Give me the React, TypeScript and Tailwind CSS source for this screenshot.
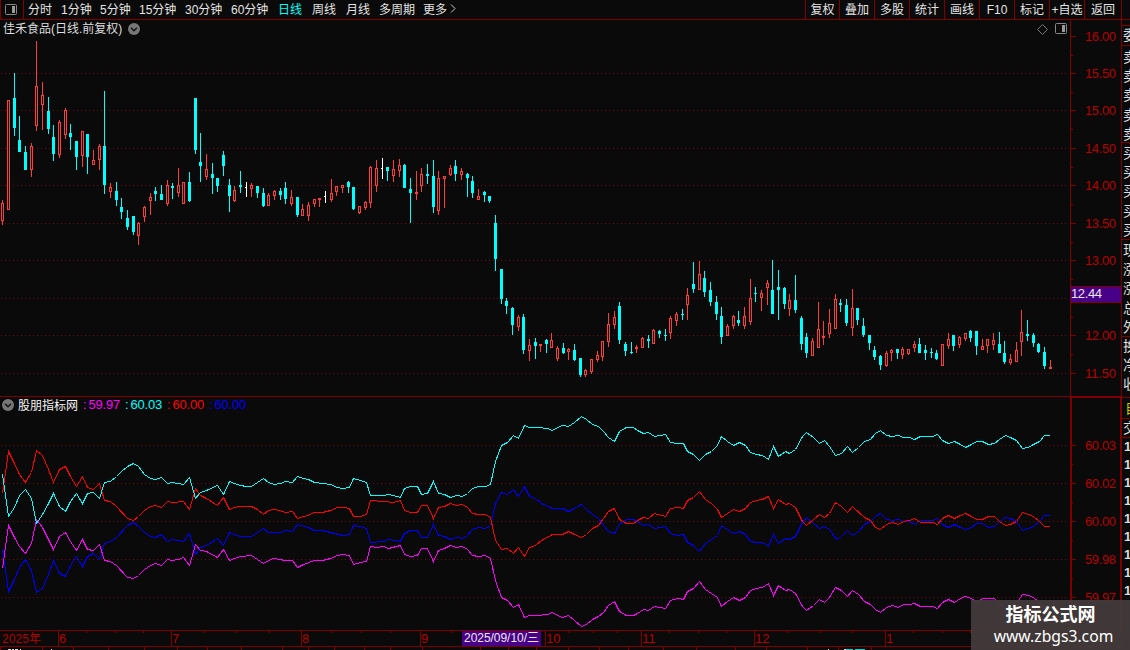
import React from "react";

type Kind = "R" | "C" | "W";
type Candle = [number, number, number, number, number, Kind];

const UP = "#ff3c3c";
const DOWN = "#00ffff";
const LINE = "#800000";
const LABEL = "#b80000";
const BG = "#0a0a0a";
const FONT = "'Liberation Sans','Noto Sans CJK SC',sans-serif";

// x, high, body top, body bottom, low, kind
const candles: Candle[] = [
  [2,200,203,221,225,"R"],[8,100,100,210,210,"R"],[14,73,98,128,136,"C"],[19,116,140,152,152,"C"],[25,146,152,170,170,"C"],
  [31,143,146,170,177,"R"],[36,41,86,126,131,"R"],[42,82,95,105,130,"R"],[48,97,111,129,134,"C"],[53,125,137,154,161,"C"],
  [59,120,122,155,158,"R"],[65,108,110,135,139,"R"],[70,124,133,137,150,"C"],[76,141,141,157,170,"C"],[82,131,131,156,167,"R"],
  [87,134,134,157,174,"C"],[93,150,160,165,165,"R"],[99,144,146,160,170,"R"],[104,91,146,185,194,"C"],[110,183,187,192,198,"R"],
  [116,182,191,200,206,"C"],[121,198,207,212,219,"C"],[127,210,218,227,230,"C"],[133,216,216,232,235,"C"],[138,222,223,236,245,"R"],
  [144,206,207,217,222,"R"],[150,193,197,201,215,"R"],[155,187,191,194,201,"C"],[161,185,194,200,200,"C"],[167,180,185,204,206,"R"],
  [172,183,186,188,199,"C"],[178,168,185,193,197,"R"],[183,182,182,204,204,"R"],[189,172,182,201,202,"C"],[195,98,98,150,154,"C"],
  [200,133,162,166,182,"C"],[206,154,169,177,180,"R"],[212,163,174,178,194,"C"],[217,178,178,186,192,"C"],[223,151,155,166,176,"C"],
  [229,179,185,196,212,"C"],[234,186,190,201,202,"R"],[240,171,185,187,193,"C"],[246,182,187,188,197,"W"],[251,183,185,189,197,"R"],
  [257,186,186,193,198,"C"],[263,188,193,206,207,"C"],[268,193,195,206,206,"R"],[274,190,191,196,200,"R"],[280,188,191,195,200,"C"],
  [285,182,188,199,204,"C"],[291,190,197,204,206,"R"],[297,197,197,215,217,"C"],[302,204,209,216,216,"R"],[308,202,205,216,221,"R"],
  [314,199,199,204,207,"R"],[319,198,198,200,207,"R"],[325,191,196,197,203,"W"],[331,179,193,200,202,"R"],[336,186,186,192,196,"R"],
  [342,185,185,188,193,"R"],[348,181,182,187,193,"C"],[353,187,187,209,210,"C"],[359,206,206,213,214,"R"],[365,201,202,208,210,"R"],
  [370,166,167,203,208,"R"],[376,160,168,186,192,"R"],[382,158,168,169,179,"W"],[387,167,167,171,181,"C"],[393,160,169,176,182,"R"],
  [399,159,165,171,177,"R"],[404,164,165,188,188,"C"],[410,178,189,193,223,"C"],[416,171,192,194,200,"R"],[421,168,174,186,192,"R"],
  [427,164,174,176,184,"C"],[433,160,176,207,213,"C"],[438,171,178,211,215,"R"],[444,176,176,179,208,"R"],[450,165,168,175,176,"R"],
  [455,160,166,174,181,"C"],[461,168,171,175,180,"R"],[467,173,174,178,197,"C"],[472,176,181,193,198,"C"],[478,189,196,200,200,"R"],
  [484,191,192,195,202,"C"],[489,196,196,201,203,"C"],[495,215,223,259,271,"C"],[501,269,269,299,304,"C"],[506,298,301,306,314,"C"],
  [512,307,308,325,335,"C"],[518,315,317,327,331,"R"],[523,314,317,350,354,"C"],[529,339,345,351,361,"R"],[535,338,342,346,359,"C"],
  [540,344,344,346,352,"R"],[546,339,340,344,353,"C"],[551,333,340,348,348,"R"],[557,346,348,359,361,"R"],[563,343,348,353,354,"C"],
  [568,348,349,352,360,"R"],[574,344,350,360,361,"C"],[580,358,358,375,377,"C"],[585,369,370,375,377,"R"],[591,359,359,372,374,"R"],
  [597,351,355,360,362,"R"],[602,341,341,357,361,"R"],[608,313,324,342,347,"R"],[614,311,317,325,329,"R"],[619,302,306,340,344,"C"],
  [625,342,344,351,356,"C"],[631,342,352,353,354,"C"],[636,345,347,349,353,"R"],[642,337,338,348,348,"R"],[648,335,339,341,348,"C"],
  [653,329,330,344,344,"R"],[659,330,331,334,338,"C"],[665,329,335,336,341,"C"],[670,316,318,333,339,"R"],[676,312,314,321,326,"R"],
  [682,309,314,315,320,"C"],[687,288,295,305,320,"R"],[693,262,284,289,293,"C"],[699,261,274,290,290,"R"],[704,271,278,292,297,"C"],
  [710,282,290,302,306,"C"],[716,296,302,314,320,"C"],[721,307,316,337,344,"C"],[727,324,326,336,336,"R"],[733,315,316,326,329,"R"],
  [738,311,320,323,326,"C"],[744,307,316,326,329,"R"],[750,279,298,322,325,"R"],[755,287,293,294,302,"C"],[761,290,293,298,311,"R"],
  [767,280,283,288,305,"R"],[772,260,290,314,314,"C"],[778,270,287,290,320,"C"],[784,287,288,304,309,"C"],[789,294,300,309,316,"R"],
  [795,275,300,310,313,"C"],[801,316,318,344,350,"C"],[806,333,337,353,358,"C"],[812,338,341,356,356,"R"],[818,302,329,348,348,"R"],
  [823,321,336,338,345,"R"],[829,309,323,334,338,"R"],[835,294,299,329,329,"R"],[840,299,303,305,312,"C"],[846,299,305,323,326,"C"],
  [852,289,308,328,336,"R"],[857,308,308,320,325,"C"],[863,318,326,335,337,"C"],[869,335,335,343,350,"C"],[874,346,350,357,360,"C"],
  [880,355,356,365,370,"C"],[886,351,353,366,367,"R"],[891,349,350,353,361,"R"],[897,349,349,353,359,"C"],[902,347,349,355,359,"R"],
  [908,349,349,354,355,"R"],[914,341,344,348,352,"R"],[919,338,344,353,353,"C"],[925,345,350,353,360,"C"],[931,348,352,353,358,"C"],
  [936,350,353,359,360,"C"],[942,344,344,366,366,"R"],[948,333,339,346,349,"R"],[953,335,335,346,351,"C"],[959,336,337,345,348,"R"],
  [965,333,333,339,341,"R"],[970,330,331,338,342,"C"],[976,331,331,346,355,"C"],[982,339,346,350,350,"R"],[987,339,339,346,353,"R"],
  [993,333,340,345,350,"R"],[999,332,344,353,353,"C"],[1004,341,353,362,364,"C"],[1010,354,359,363,365,"R"],[1016,342,350,362,362,"R"],
  [1021,310,332,342,356,"R"],[1027,320,334,336,341,"C"],[1033,333,335,343,347,"C"],[1038,343,344,352,353,"C"],[1044,347,352,366,369,"C"],
  [1050,360,367,369,369,"R"],
];

const series = [
  { color: "#0000ff", points: "2,549 8,591 14,579 19,567 25,559 31,570 36,592 42,588 48,574 53,560 59,573 65,576 70,565 76,556 82,566 87,556 93,553 99,559 104,543 110,541 116,537 127,525 133,522 138,526 144,532 150,536 155,537 161,534 167,541 172,539 183,541 189,533 195,554 200,547 206,545 217,538 223,545 229,532 234,534 240,536 251,536 263,528 268,532 280,532 285,530 292,531 297,524 308,527 314,530 322,530 330,532 342,535 349,534 353,525 360,526 366,528 370,542 383,541 388,539 400,541 404,533 410,530 417,530 421,537 427,537 433,524 438,535 444,536 450,539 456,537 462,538 467,535 472,529 478,527 485,528 490,525 495,503 501,492 507,494 513,489 518,496 524,486 529,496 535,498 541,503 552,508 562,508 568,511 574,508 581,504 586,509 592,514 598,518 603,525 608,531 614,533 619,524 626,519 633,519 637,521 643,525 648,524 654,528 665,526 670,533 677,535 683,534 687,542 693,545 699,551 705,543 711,539 717,535 721,525 727,529 733,533 739,531 745,534 750,541 756,542 762,542 768,546 773,534 778,543 785,538 789,539 795,536 802,522 806,517 813,523 819,528 824,526 829,529 836,539 841,536 847,530 852,535 858,531 864,524 870,521 875,516 880,513 886,519 892,520 898,519 903,521 909,521 914,524 920,520 932,520 937,518 942,524 948,527 954,524 960,527 965,529 971,527 976,523 982,523 988,527 994,526 999,521 1005,517 1010,518 1016,521 1022,530 1028,528 1033,526 1039,521 1044,515 1049,515" },
  { color: "#ff0000", points: "2,493 8,451 14,463 19,474 25,482 31,472 36,450 42,455 48,469 53,482 59,469 65,466 70,476 76,486 82,476 87,487 93,489 99,483 104,500 110,501 116,506 127,518 133,520 138,516 144,510 150,506 155,505 161,507 167,501 172,502 183,501 189,509 195,488 200,495 206,498 217,505 223,497 229,509 234,507 240,506 251,506 257,509 263,514 268,510 273,509 279,510 285,512 292,511 297,518 303,516 308,515 313,512 322,512 330,510 337,507 343,507 349,508 353,516 360,516 366,514 370,500 383,501 393,502 400,500 404,510 410,512 417,512 421,505 427,505 433,518 438,507 444,506 450,503 456,505 462,504 467,507 472,513 478,514 485,514 490,517 495,540 501,549 507,548 513,553 518,547 524,556 529,547 535,545 541,540 552,534 562,534 568,531 574,534 581,537 586,534 592,528 598,525 603,518 608,511 614,508 619,519 626,523 633,523 637,520 643,517 648,518 654,513 665,516 670,508 677,507 683,508 687,500 693,497 699,491 705,499 711,503 717,509 721,517 727,513 733,509 739,511 745,508 750,502 756,500 762,499 768,496 773,508 778,499 785,504 789,503 795,507 802,521 806,525 813,519 819,514 824,517 829,513 835,502 841,506 847,512 852,506 864,517 870,520 875,527 880,529 886,524 892,522 898,524 903,521 909,520 914,518 920,522 932,522 937,524 942,518 948,515 954,518 960,515 965,513 971,516 976,519 982,519 988,516 994,516 999,521 1005,525 1010,524 1016,521 1022,512 1028,514 1033,516 1039,521 1044,526 1049,526" },
  { color: "#ff00ff", points: "2,568 8,525 14,537 19,546 25,553 31,543 36,519 42,527 48,539 53,549 59,536 65,532 70,541 76,550 82,539 87,549 93,550 99,544 104,560 110,561 116,565 127,577 133,578 138,575 144,569 150,565 155,563 161,565 167,559 172,560 178,559 183,557 189,565 195,544 200,550 206,551 217,557 223,549 229,560 234,558 240,556 251,555 263,563 268,560 273,558 279,559 285,560 292,560 297,567 303,564 314,560 322,560 330,558 337,555 342,554 349,555 353,564 360,562 366,561 370,546 377,547 383,546 388,548 400,545 404,554 410,556 417,555 421,548 427,548 433,561 438,550 444,548 450,545 456,547 462,546 467,549 472,555 478,556 485,555 490,558 495,580 501,597 507,600 513,607 518,604 524,617 529,615 537,615 547,614 552,612 557,615 562,617 568,615 574,620 581,626 586,624 592,619 598,616 603,612 608,605 614,601 619,611 626,615 633,615 637,613 643,609 648,610 654,606 665,608 670,600 677,598 683,599 687,591 693,588 699,581 705,589 711,593 717,597 721,606 727,601 733,597 739,600 745,597 750,590 756,588 762,587 768,583 773,595 778,585 785,590 789,589 795,593 802,606 806,610 813,605 819,599 824,602 829,597 835,587 841,590 847,596 852,590 858,594 864,601 870,604 875,609 880,612 886,607 892,605 898,607 903,604 909,604 914,603 920,606 932,606 937,608 942,602 948,599 954,602 960,598 965,596 971,598 976,602 982,598 994,598 999,603 1005,608 1010,606 1016,603 1022,594 1028,595 1033,597 1039,602 1044,607 1049,607" },
  { color: "#00ffff", points: "2,474 8,516 14,507 19,495 25,489 31,498 36,523 42,514 48,503 53,493 59,506 65,511 70,501 76,493 82,503 87,493 93,492 99,498 104,482 110,481 116,476 121,471 127,466 133,463 138,466 144,474 150,478 155,479 161,477 167,483 172,482 183,484 189,477 195,498 200,492 206,490 217,485 223,494 229,481 234,483 240,485 246,486 251,486 263,478 268,482 274,484 280,483 285,481 292,482 297,476 303,478 308,479 314,482 322,483 330,484 337,487 342,488 349,487 353,478 360,480 366,482 370,495 383,495 388,494 393,495 400,497 404,488 410,486 417,486 421,494 427,493 433,481 438,493 444,494 450,497 456,495 462,496 467,493 472,488 478,486 485,486 490,484 495,461 501,445 507,442 513,435 518,438 524,425 529,427 537,427 547,428 552,430 557,427 562,425 568,426 574,422 581,416 586,419 592,424 598,426 603,431 608,437 614,441 619,431 626,427 633,427 637,430 643,433 648,432 654,436 665,434 670,442 677,443 683,443 687,451 693,454 699,460 705,454 711,451 717,445 721,436 727,441 733,445 739,442 745,445 750,452 756,454 762,455 768,459 773,446 778,456 785,451 789,453 795,449 802,436 806,432 813,437 819,443 824,440 829,446 835,455 841,453 847,446 852,452 858,447 864,441 870,439 875,433 880,430 886,435 892,436 898,435 903,437 909,437 914,439 920,436 932,436 937,434 942,440 948,443 954,441 960,444 965,447 971,444 976,441 982,441 988,444 994,443 999,439 1005,435 1010,437 1016,440 1022,448 1028,447 1033,444 1039,441 1044,435 1049,435" },
];

const periods = [
  { label: "分时", w: "w-[33px]" },
  { label: "1分钟", w: "w-[39px]" },
  { label: "5分钟", w: "w-[39px]" },
  { label: "15分钟", w: "w-[46px]" },
  { label: "30分钟", w: "w-[46px]" },
  { label: "60分钟", w: "w-[47px]" },
  { label: "日线", w: "w-[34px]", active: true },
  { label: "周线", w: "w-[34px]" },
  { label: "月线", w: "w-[33px]" },
  { label: "多周期", w: "w-[44px]" },
  { label: "更多", w: "w-[26px]" },
];

const tools = [
  { label: "复权", w: "w-[34px]" },
  { label: "叠加", w: "w-[35px]" },
  { label: "多股", w: "w-[35px]" },
  { label: "统计", w: "w-[35px]" },
  { label: "画线", w: "w-[35px]" },
  { label: "F10", w: "w-[35px]" },
  { label: "标记", w: "w-[35px]" },
  { label: "+自选", w: "w-[35px]" },
  { label: "返回", w: "w-[37px]" },
];

const priceTicks: [number, string][] = [
  [36, "16.00"], [73, "15.50"], [110, "15.00"], [148, "14.50"], [185, "14.00"],
  [223, "13.50"], [260, "13.00"], [298, ""], [335, "12.00"], [373, "11.50"],
];
const valueTicks: [number, string][] = [
  [445, "60.03"], [483, "60.02"], [521, "60.00"], [559, "59.98"], [597, "59.97"],
];

const months: [number, string][] = [
  [58, "6"], [171, "7"], [301, "8"], [420, "9"], [545, "10"], [641, "11"], [754, "12"], [885, "1"],
];
const dateTicks = [86, 115, 143, 204, 236, 269, 331, 361, 390, 451, 569, 593, 617, 669, 698, 726, 787, 820, 852, 913, 942, 970];
const stripTicks = [0, 42, 73, 108, 144, 177, 207, 241, 282, 308, 334, 364, 390, 422, 480, 508, 536, 568, 599, 628, 663, 696, 735, 766, 807, 838, 871];

function GridLine({ y }: { y: number }) {
  return <line x1={1} x2={1068} y1={y + 0.5} y2={y + 0.5} stroke="#6c0c0c" strokeDasharray="1 3" />;
}

function AxisLabels({ ticks }: { ticks: [number, string][] }) {
  return (
    <>
      {ticks.map(([y, label]) => (
        <g key={y}>
          <rect x={1071} y={y} width={5} height={1} fill={LINE} />
          {y < 597 && y !== 373 && <rect x={1071} y={y + 19} width={2} height={1} fill={LINE} />}
          {label && (
            <text x={1085} y={y + 5} fontSize={13} textLength={31} fill={LABEL} fontFamily={FONT}>
              {label}
            </text>
          )}
        </g>
      ))}
    </>
  );
}

function CandleMark({ c }: { c: Candle }) {
  const [x, high, top, bottom, low, kind] = c;
  const color = kind === "R" ? UP : kind === "C" ? DOWN : "#ffffff";
  return (
    <g>
      <rect x={x} y={high} width={1} height={low - high} fill={color} />
      <rect x={x - 1} y={top} width={kind === "W" ? 2 : 3} height={bottom - top} fill={color} />
      {kind === "R" && bottom - top > 2 && <rect x={x} y={top + 1} width={1} height={bottom - top - 2} fill={BG} />}
    </g>
  );
}

function CollapseIcon() {
  return (
    <svg width="12" height="12" viewBox="0 0 12 12" className="shrink-0">
      <circle cx="6" cy="6" r="6" fill="#777777" />
      <path d="M3 4.7 L6 7.7 L9 4.7" fill="none" stroke="#111111" strokeWidth="1.4" />
    </svg>
  );
}

function PanelIcon() {
  return (
    <svg width="12" height="12" viewBox="0 0 12 12" className="shrink-0">
      <rect x="0.5" y="0.5" width="11" height="10" rx="1" fill="none" stroke="#888888" strokeWidth="1" />
      <rect x="7" y="2" width="3" height="7" fill="#999999" />
    </svg>
  );
}

function Toolbar() {
  return (
    <header className="flex h-5 shrink-0 border-b border-[#800000] text-[12px] leading-[19px] text-[#e4e4e4]">
      <div className="flex w-6 shrink-0 items-center border-x border-[#800000] pl-1">
        <PanelIcon />
      </div>
      <nav className="flex grow pl-1">
        {periods.map((p) => (
          <span key={p.label} className={`shrink-0 whitespace-nowrap pt-px ${p.w} ${p.active ? "text-[#00ffff]" : ""}`}>
            {p.label}
          </span>
        ))}
        <svg width="8" height="18" viewBox="0 0 8 18">
          <path d="M2 4.5 L6 8.5 L2 12.5" fill="none" stroke="#cccccc" />
        </svg>
      </nav>
      <div className="flex w-[325px] shrink-0">
        {tools.map((t) => (
          <span key={t.label} className={`shrink-0 whitespace-nowrap border-l border-[#800000] pt-px text-center ${t.w}`}>
            {t.label}
          </span>
        ))}
        <span className="grow border-l border-[#800000]" />
      </div>
    </header>
  );
}

function PricePanel() {
  return (
    <section className="relative h-[376px]">
      <svg width="1121" height="376" viewBox="0 20 1121 376" shapeRendering="crispEdges" className="block">
        {priceTicks.slice(1).map(([y]) => (
          <GridLine key={y} y={y} />
        ))}
        {candles.map((c) => (
          <CandleMark key={c[0]} c={c} />
        ))}
        <rect x={1070} y={20} width={1} height={376} fill={LINE} />
        <AxisLabels ticks={priceTicks} />
        <rect x={1071} y={286} width={50} height={17} fill={LINE} />
        <rect x={1071} y={287} width={50} height={15} fill="#480088" />
        <text x={1071} y={298} fontSize={13} textLength={31} fill="#e8e8e8" fontFamily={FONT}>12.44</text>
      </svg>
      <div className="absolute inset-x-0 top-0 flex h-[18px] items-center pl-[3px] pr-[54px]">
        <h1 className="w-[125px] whitespace-nowrap pt-px text-[12px] leading-[19px] text-[#dddddd]">佳禾食品(日线.前复权)</h1>
        <CollapseIcon />
        <div className="ml-auto flex items-center gap-[7px]">
          <svg width="11" height="11" viewBox="0 0 11 11">
            <path d="M5.5 0.5 L10.5 5.5 L5.5 10.5 L0.5 5.5 Z" fill="none" stroke="#777777" />
          </svg>
          <PanelIcon />
        </div>
      </div>
    </section>
  );
}

function IndicatorPanel() {
  return (
    <section className="relative h-[234px]">
      <svg width="1121" height="234" viewBox="0 396 1121 234" shapeRendering="crispEdges" className="block">
        <rect x={0} y={396} width={1121} height={1} fill={LINE} />
        <rect x={1070} y={396} width={51} height={2} fill={LINE} />
        <rect x={1070} y={396} width={2} height={234} fill={LINE} />
        <rect x={1120} y={396} width={1} height={234} fill={LINE} />
        {valueTicks.map(([y]) => (
          <GridLine key={y} y={y} />
        ))}
        {series.map((s) => (
          <g key={s.color} transform="translate(0.5 0.5)">
            <polyline points={s.points} fill="none" stroke={s.color} strokeWidth={1} />
          </g>
        ))}
        <AxisLabels ticks={valueTicks} />
      </svg>
      <div className="absolute left-0 top-0 flex h-[18px] items-center pl-[2px] text-[13px] leading-[18px]">
        <CollapseIcon />
        <span className="ml-[4px] w-[65px] whitespace-nowrap pt-px text-[12px] text-[#f4f4f4]">股朋指标网</span>
        <span className="flex w-[42px] gap-[2px] tracking-[-0.2px] text-[#ff00ff]"><i className="not-italic">:</i>59.97</span>
        <span className="flex w-[42px] gap-[2px] tracking-[-0.2px] text-[#00ffff]"><i className="not-italic">:</i>60.03</span>
        <span className="flex w-[42px] gap-[2px] tracking-[-0.2px] text-[#ff0000]"><i className="not-italic">:</i>60.00</span>
        <span className="flex w-[42px] gap-[2px] tracking-[-0.2px] text-[#0000ff]"><i className="not-italic">:</i>60.00</span>
      </div>
    </section>
  );
}

function TimeAxis() {
  return (
    <svg width="1121" height="20" viewBox="0 630 1121 20" shapeRendering="crispEdges" className="block" fontFamily={FONT}>
      <rect x={0} y={630} width={1121} height={1} fill={LINE} />
      <rect x={0} y={646} width={1121} height={1} fill={LINE} />
      {dateTicks.map((x) => (
        <rect key={x} x={x} y={631} width={1} height={2} fill={LINE} />
      ))}
      {stripTicks.map((x) => (
        <rect key={x} x={x} y={647} width={1} height={3} fill={LINE} />
      ))}
      <text x={2} y={643} fontSize={12} textLength={39} fill={LABEL}>2025年</text>
      {months.map(([x, label]) => (
        <g key={x}>
          <rect x={x} y={631} width={1} height={15} fill={LINE} />
          <text x={x + 1} y={643} fontSize={13} fill={LABEL}>{label}</text>
        </g>
      ))}
      <rect x={462} y={631} width={79} height={15} fill="#480088" />
      <text x={464} y={642} fontSize={12} textLength={75} fill="#e8e8e8">2025/09/10/三</text>
      <path d="M8 649.5h3m1 0h2m1 0h3m2 0h1m30 0h1M828 649.5h1m15 0h2" stroke="#dddddd" />
      <path d="M846 649.5h7m2 0h10" stroke="#00d0d0" />
    </svg>
  );
}

function QuoteEdge() {
  const groups = [
    { rows: ["委"], box: "h-[20px]" },
    { rows: ["卖", "卖", "卖", "卖", "卖"], box: "h-[97px] pt-[2px]" },
    { rows: ["买", "买", "买", "买", "买"], box: "h-[97px] pt-px" },
    { rows: ["现", "涨", "涨", "总", "外"], box: "h-[97px] pt-px" },
    { rows: ["换", "净", "收"], box: "h-[61px]" },
  ];
  return (
    <aside className="flex w-[9px] shrink-0 flex-col overflow-hidden border-l border-[#800000] pt-[5px] text-[14px] text-[#dddddd]">
      {groups.map((g, i) => (
        <div key={i} className={`flex shrink-0 flex-col overflow-hidden border-t border-[#800000] pl-px ${g.box}`}>
          {g.rows.map((s, j) => (
            <span key={j} className="h-[19.2px] w-[14px] shrink-0 leading-[19px]">{s}</span>
          ))}
        </div>
      ))}
      <div className="h-[21px] shrink-0 border-t border-[#800000] pl-[3px] leading-[20px] text-[#c8c800]">
        <span className="block w-[14px]">自</span>
      </div>
      <div className="h-[19px] shrink-0 border-t border-[#800000] pl-px leading-[18px]">
        <span className="block w-[14px]">交</span>
      </div>
      <div className="flex grow flex-col border-t border-[#800000] pl-[2px]">
        {Array.from({ length: 9 }, (_, i) => (
          <span key={i} className="h-[18px] shrink-0 text-[13px] font-bold leading-[18px]">1</span>
        ))}
      </div>
    </aside>
  );
}

export default function App() {
  return (
    <div className="relative flex h-[650px] w-[1130px] flex-col overflow-hidden bg-[#0a0a0a] font-['Liberation_Sans','Noto_Sans_CJK_SC',sans-serif]">
      <Toolbar />
      <div className="flex h-[630px]">
        <main className="flex w-[1121px] shrink-0 flex-col">
          <PricePanel />
          <IndicatorPanel />
          <TimeAxis />
        </main>
        <QuoteEdge />
      </div>
      <div className="absolute bottom-0 right-0 flex h-[50px] w-[159px] flex-col items-center bg-[#433b3b]/95 pt-[3px] text-white">
        <strong className="text-[18px] font-bold leading-[24px]">指标公式网</strong>
        <span className="pl-[6px] font-['Noto_Sans',sans-serif] text-[15.7px] leading-[18px]">www.zbgs3.com</span>
      </div>
    </div>
  );
}
